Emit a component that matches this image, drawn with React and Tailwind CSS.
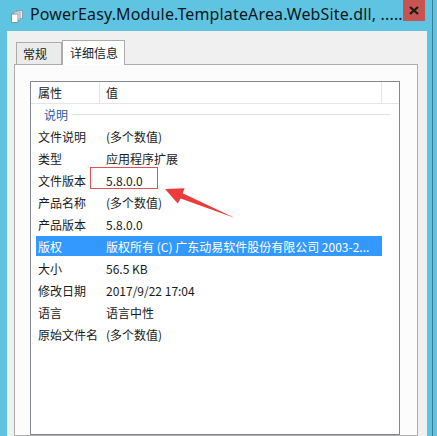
import React from "react";

const rows = [
  { name: "文件说明", value: "(多个数值)" },
  { name: "类型", value: "应用程序扩展" },
  { name: "文件版本", value: "5.8.0.0" },
  { name: "产品名称", value: "(多个数值)" },
  { name: "产品版本", value: "5.8.0.0" },
  { name: "版权", value: "版权所有 (C) 广东动易软件股份有限公司 2003-2...", selected: true },
  { name: "大小", value: "56.5 KB" },
  { name: "修改日期", value: "2017/9/22 17:04" },
  { name: "语言", value: "语言中性" },
  { name: "原始文件名", value: "(多个数值)" },
];

function FileIcon() {
  return (
    <svg width="12" height="13" viewBox="0 0 12 13">
      <rect x="5.5" y="0.5" width="6" height="8" fill="#e8eef2" stroke="#8aa0ad" />
      <rect x="3" y="2" width="6" height="8" fill="#f4f7f9" stroke="#8aa0ad" />
      <rect x="0.5" y="4" width="6.5" height="8.5" fill="#ffffff" stroke="#7f949f" />
    </svg>
  );
}

export default function App() {
  return (
    <div
      className="w-[437px] h-[436px] overflow-hidden bg-[#5fc4e2] flex relative text-[12px] text-[#1a1a1a]"
      style={{ fontFamily: '"Noto Sans CJK SC", "Noto Sans", sans-serif' }}
    >
      <div className="w-[432px] flex flex-col">
        {/* title bar */}
        <div className="h-[31px] flex items-start shrink-0">
          <div className="ml-[11px] mt-[10px]">
            <FileIcon />
          </div>
          <div
            className="ml-[7px] mt-[3px] text-[16px] tracking-[0.15px] leading-[22px] text-[#101820] whitespace-nowrap"
            style={{ fontFamily: '"Noto Sans", "Open Sans", sans-serif' }}
          >
            PowerEasy.Module.TemplateArea.WebSite.dll, .....
          </div>
          <div className="ml-auto mr-[7px] w-[30px] h-[21px] bg-[#c75450] flex items-center justify-center">
            <svg width="10" height="9" viewBox="0 0 10 9">
              <path d="M1 1 L9 8 M9 1 L1 8" stroke="#1a1a1a" strokeWidth="2.2" />
            </svg>
          </div>
        </div>

        {/* dialog body */}
        <div className="flex-1 ml-[7px] mr-[5px] bg-[#f0f0f0] pt-[9px] pl-[7px] pr-[9px] flex flex-col min-h-0">
          <div className="h-[24px] flex items-end pl-[2px] shrink-0">
            <div className="w-[46px] h-[22px] border border-b-0 border-[#acacac] bg-[#ebebeb] pl-[6px] leading-[22px]">
              常规
            </div>
            <div className="w-[63px] h-[25px] -mb-px border border-b-0 border-[#acacac] bg-white pl-[7px] leading-[24px] relative z-10">
              详细信息
            </div>
          </div>

          <div className="flex-1 border border-[#acacac] bg-[#fcfcfc] pt-[16px] pl-[15px] pr-[17px] flex flex-col min-h-0">
            <div className="flex-1 border border-[#828790] bg-white flex flex-col">
              {/* header */}
              <div className="h-[22px] flex border-b border-[#e5e5e5] shrink-0">
                <div className="w-[69px] pl-[7px] border-r border-[#e5e5e5] leading-[21px]">属性</div>
                <div className="w-[282px] pl-[6px] border-r border-[#e5e5e5] leading-[21px]">值</div>
              </div>

              {/* group */}
              <div className="h-[21px] flex items-center pl-[13px] shrink-0">
                <span className="text-[#2a5ca8]">说明</span>
                <div className="flex-1 h-px bg-[#e2e2e2] ml-[4px] mr-[9px]" />
              </div>

              {rows.map((r) => (
                <div key={r.name} className="h-[22px] pl-[5px] py-px shrink-0">
                  <div
                    className={
                      "w-[346px] h-[20px] px-[2px] pt-[2px] flex items-center whitespace-nowrap " +
                      (r.selected ? "bg-[#3399ff] text-white" : "")
                    }
                  >
                    <div className="w-[68px]">{r.name}</div>
                    <div>{r.value}</div>
                  </div>
                </div>
              ))}
            </div>
          </div>
        </div>
      </div>

      {/* edge of the window behind */}
      <div className="w-[5px] bg-[#5fc4e2] border-l border-[#3c7e96]" />

      {/* annotation */}
      <div className="absolute left-[90px] top-[167px] w-[68px] h-[22px] border border-[#e4505a]" />
      <svg className="absolute left-0 top-0" width="437" height="436" viewBox="0 0 437 436">
        <polygon
          points="165,189 184.7,188.3 182.6,193.3 235,218 180.6,198.6 177.8,203.4"
          fill="#ec3b3b"
        />
      </svg>
    </div>
  );
}
